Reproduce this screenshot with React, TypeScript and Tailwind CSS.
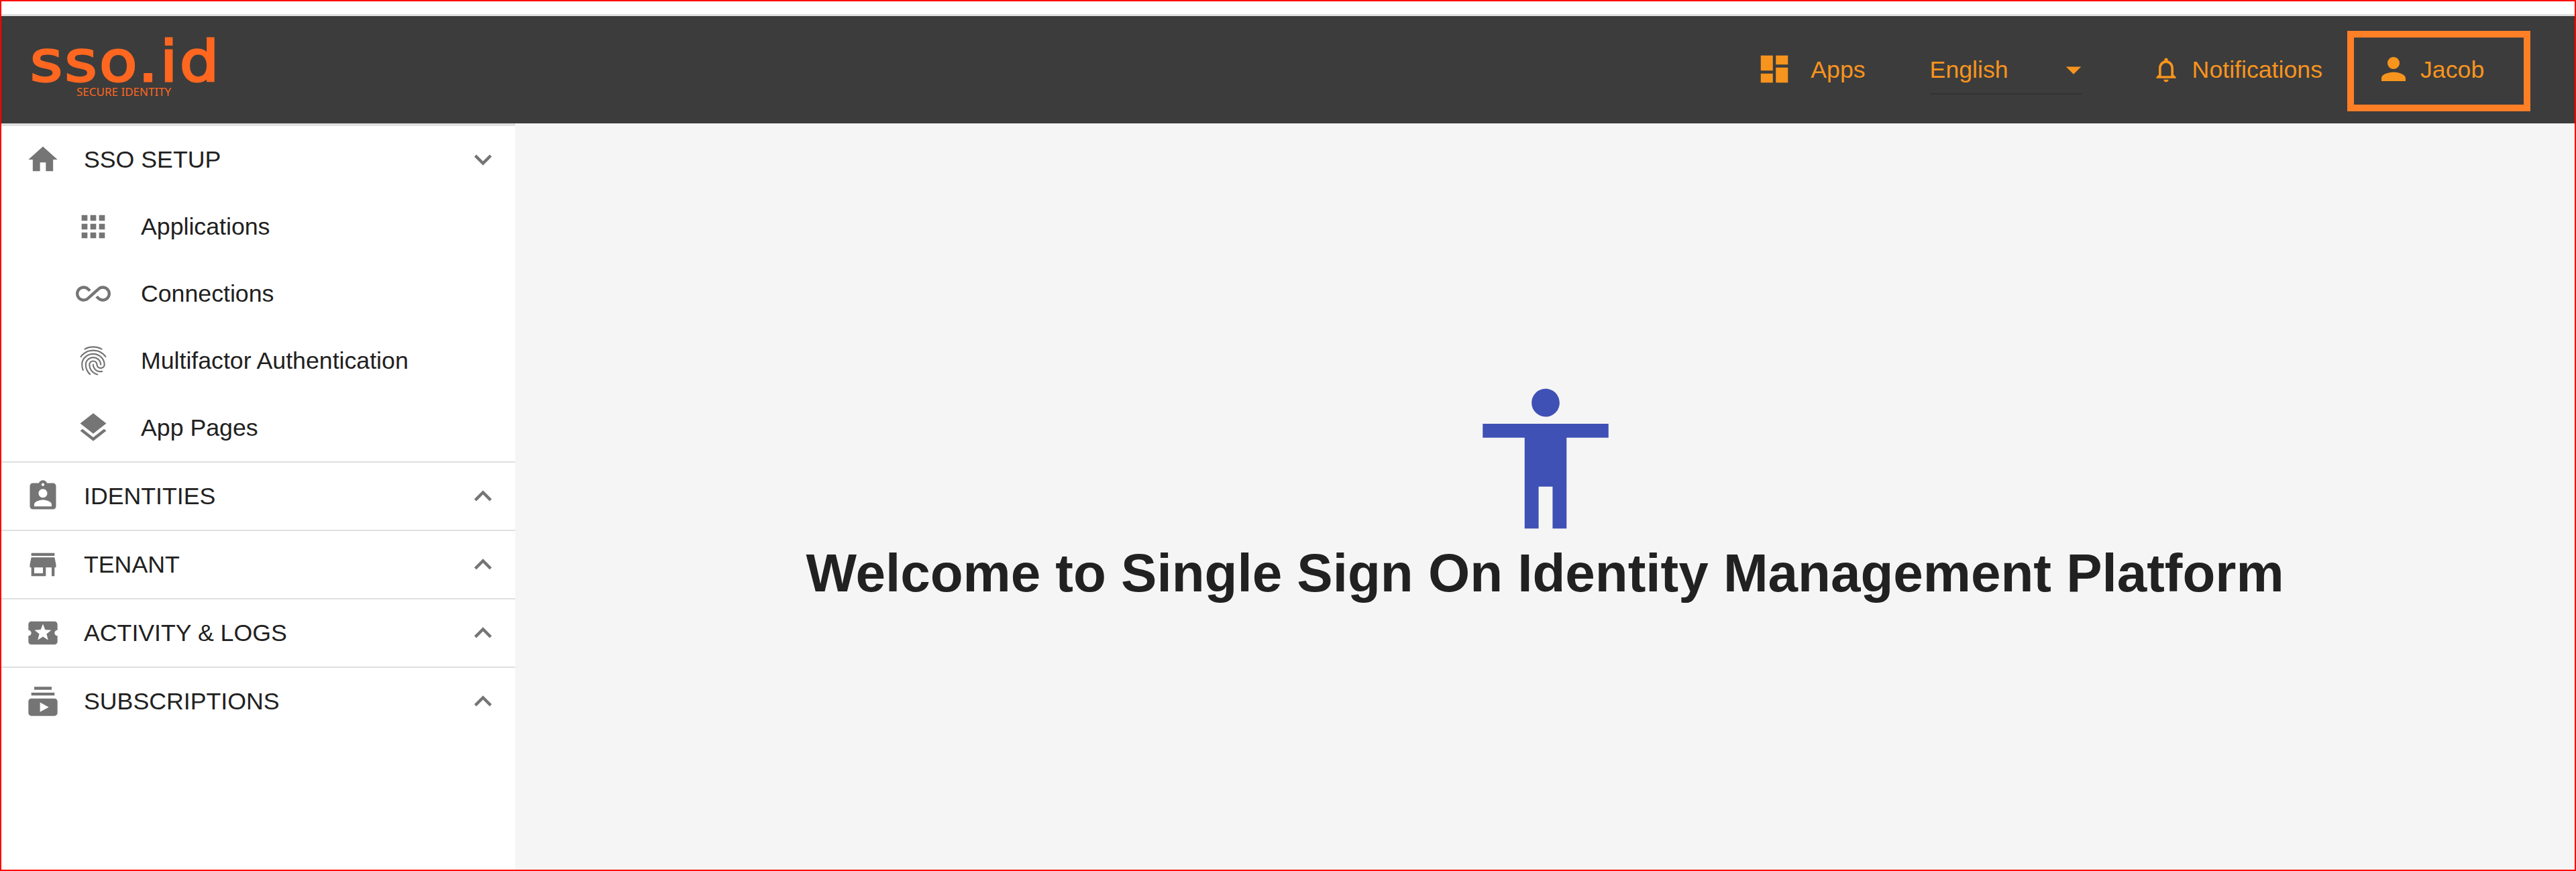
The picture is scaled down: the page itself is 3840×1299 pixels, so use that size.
import React from "react";
import {
  MdHome, MdApps, MdAllInclusive, MdFingerprint, MdLayers, MdAssignmentInd, MdStore,
  MdLocalActivity, MdSubscriptions, MdExpandMore, MdExpandLess, MdDashboard, MdArrowDropDown,
  MdNotificationsNone, MdPerson, MdAccessibility,
} from "react-icons/md";

const subs = [
  { label: "Applications", Icon: MdApps },
  { label: "Connections", Icon: MdAllInclusive },
  { label: "Multifactor Authentication", Icon: MdFingerprint },
  { label: "App Pages", Icon: MdLayers },
];
const sections = [
  { label: "IDENTITIES", Icon: MdAssignmentInd },
  { label: "TENANT", Icon: MdStore },
  { label: "ACTIVITY & LOGS", Icon: MdLocalActivity },
  { label: "SUBSCRIPTIONS", Icon: MdSubscriptions },
];

function SectionRow({ label, Icon, Chevron }: { label: string; Icon: React.ComponentType<{ className?: string }>; Chevron: React.ComponentType<{ className?: string }> }) {
  return (
    <div className="flex h-[100px] items-center pl-[36px] pr-[22px]">
      <Icon className="size-[52px] shrink-0 text-[#757575]" />
      <span className="ml-[35px] flex-1 pt-[2px] text-[35.7px] text-[#212121]">{label}</span>
      <Chevron className="size-[52px] shrink-0 text-[#757575]" />
    </div>
  );
}

export default function App() {
  return (
    <div className="flex h-screen flex-col overflow-hidden border-2 border-[#ff0000] bg-white font-['Liberation_Sans',Arial,sans-serif]">
      <div className="h-[19px] shrink-0 bg-white" />
      <header className="flex h-[163px] shrink-0 items-center border-t-[3px] border-[#e0e0e0] bg-[#3c3c3c] text-[35.7px] text-[#f7941d]">
        <div className="ml-[43px] flex w-[280px] flex-col items-start self-start pt-[33px]">
          <span className="origin-left scale-x-[1.1] font-['DejaVu_Sans',sans-serif] text-[84px] leading-[70px] tracking-[3px] text-[#ff6720] [-webkit-text-stroke:3px_#ff6720]">sso.id</span>
          <span className="ml-[69px] mt-[1px] font-['Noto_Sans',sans-serif] text-[17px] leading-[17px] text-[#ff6720]">SECURE IDENTITY</span>
        </div>
        <div className="ml-auto mr-[66px] flex items-center">
          <MdDashboard className="mb-[3px] size-[54px]" />
          <span className="ml-[27px] pt-[2px]">Apps</span>
          <div className="relative ml-[96px] flex h-[72px] w-[226px] items-center justify-between">
            <span className="pt-[2px]">English</span>
            <MdArrowDropDown className="-mr-[15px] size-[54px]" />
            <div className="absolute bottom-[-1px] left-0 h-[2px] w-full bg-[#333333]" />
          </div>
          <MdNotificationsNone className="ml-[104px] size-[44px]" />
          <span className="ml-[17px] pt-[2px]">Notifications</span>
          <div className="ml-[37px] mt-[4px] flex h-[120px] w-[273px] items-center border-[10px] border-[#ff7f27] pb-[4px] pl-[32px]">
            <MdPerson className="mb-[3px] size-[54px]" />
            <span className="ml-[13px] pt-[2px]">Jacob</span>
          </div>
        </div>
      </header>
      <div className="flex min-h-0 flex-1">
        <aside className="w-[766px] shrink-0 border-t-[4px] border-[#e0e0e0] bg-white">
          <SectionRow label="SSO SETUP" Icon={MdHome} Chevron={MdExpandMore} />
          {subs.map(({ label, Icon }) => (
            <div key={label} className="flex h-[100px] items-center pl-[111px]">
              <Icon className="size-[52px] shrink-0 text-[#757575]" />
              <span className="ml-[45px] pt-[2px] text-[35.7px] text-[#212121]">{label}</span>
            </div>
          ))}
          {sections.map(({ label, Icon }) => (
            <div key={label} className="border-t-2 border-[#e0e0e0]">
              <SectionRow label={label} Icon={Icon} Chevron={MdExpandLess} />
            </div>
          ))}
        </aside>
        <main className="flex flex-1 flex-col items-center bg-[#f5f5f5] pt-[375px]">
          <MdAccessibility className="ml-[2px] size-[250px] text-[#3f51b5]" />
          <h1 className="mt-[4px] text-[80px] font-bold leading-[84px] text-[#212121]">Welcome to Single Sign On Identity Management Platform</h1>
        </main>
      </div>
    </div>
  );
}
